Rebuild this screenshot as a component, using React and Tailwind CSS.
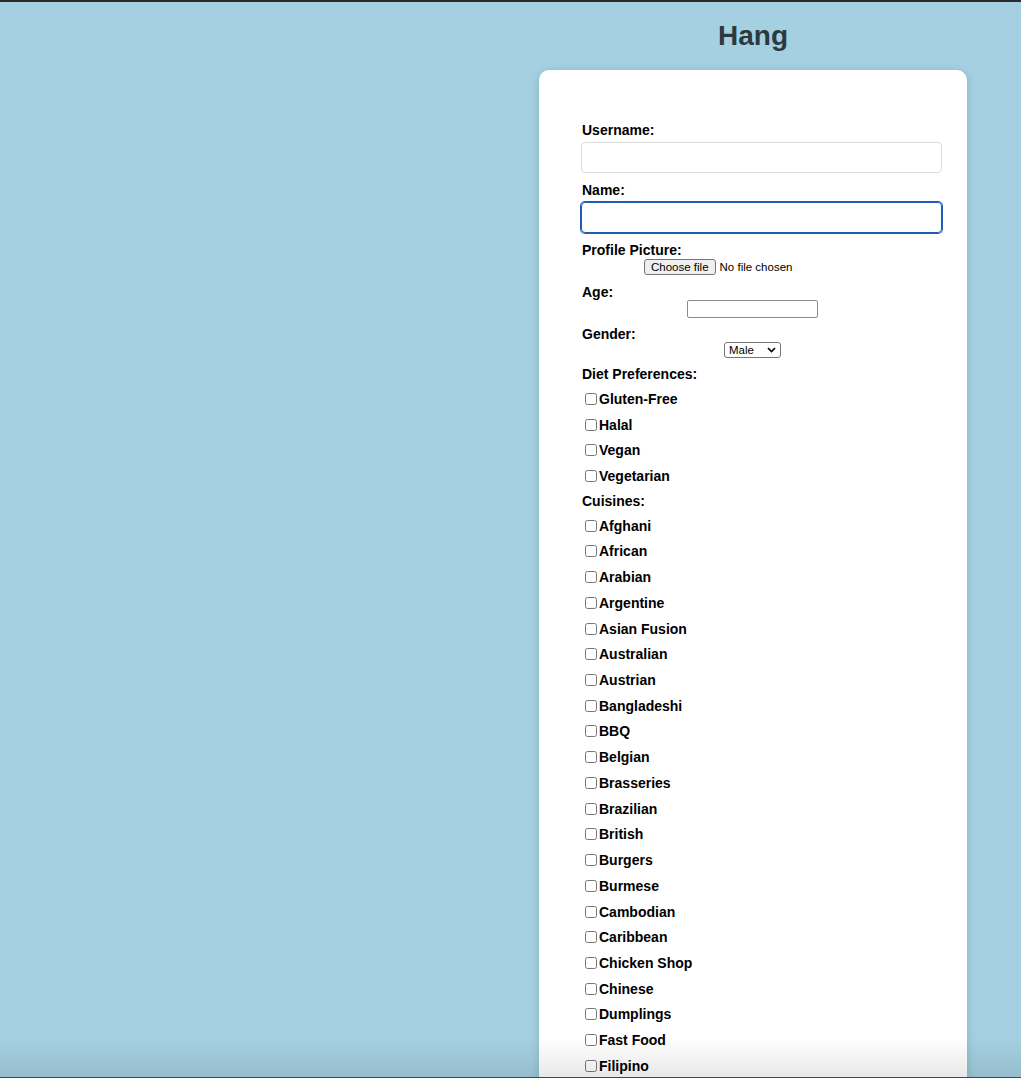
import React from 'react';

const diets = ['Gluten-Free', 'Halal', 'Vegan', 'Vegetarian'];

const cuisines = [
    'Afghani', 'African', 'Arabian', 'Argentine', 'Asian Fusion', 'Australian', 'Austrian',
    'Bangladeshi', 'BBQ', 'Belgian', 'Brasseries', 'Brazilian', 'British', 'Burgers', 'Burmese',
    'Cambodian', 'Caribbean', 'Chicken Shop', 'Chinese', 'Dumplings', 'Fast Food', 'Filipino',
];

const CheckRow = ({ label }) => (
    <label className="flex items-center h-[25.72px]">
        <input type="checkbox" className="m-0 ml-[3px] mr-[2px] w-[12px] h-[12px]" />
        <span>{label}</span>
    </label>
);

const App = () => {
    return (
        <div className="relative h-[1078px] overflow-hidden bg-[#a4d0e1] border-t-2 border-[#2b2b2b] font-['Liberation_Sans',Arial,sans-serif]">
            <div className="flex justify-end pr-[54px]">
                <div className="w-[428px]">
                    <h1 className="mt-[18px] mb-[19px] text-center text-[28px] leading-[31px] font-bold text-[#2c3a40]">Hang</h1>

                    <div className="bg-white rounded-[10px] px-[43px] pt-[52px] pb-[40px] shadow-[0_2px_10px_rgba(0,0,0,0.15)] text-[14px] leading-[16px] font-bold text-black">
                        {/* Username */}
                        <div className="mb-[4px]">Username:</div>
                        <input type="text" className="block w-[361px] h-[31px] border border-[#dcdcdc] rounded-[4px] mb-[9px] -ml-px outline-none" />

                        {/* Name */}
                        <div className="mb-[4px]">Name:</div>
                        <input type="text" className="block w-[361px] h-[31px] border border-[#1f5cb8] ring-1 ring-[#1f5cb8] rounded-[4px] mb-[9px] -ml-px outline-none" />

                        {/* Profile picture */}
                        <div>Profile Picture:</div>
                        <div className="flex justify-center h-[18px] mb-[8px] w-[341px] font-normal text-[11.5px]">
                            <div className="w-[217px] flex items-center">
                                <span className="h-[16px] px-[6px] flex items-center border border-[#767676] rounded-[3px] bg-[#efefef] text-black">Choose file</span>
                                <span className="ml-[4px] text-black">No file chosen</span>
                            </div>
                        </div>

                        {/* Age */}
                        <div>Age:</div>
                        <div className="flex justify-center w-[341px] mb-[8px]">
                            <input type="text" className="block w-[131px] h-[18px] border border-[#8a8a8a] rounded-[2px] outline-none" />
                        </div>

                        {/* Gender */}
                        <div>Gender:</div>
                        <div className="flex justify-center w-[341px] mb-[8px]">
                            <div className="w-[57px] h-[16px] border border-[#767676] rounded-[3px] flex items-center justify-between pl-[4px] pr-[4px] font-normal text-[11.5px]">
                                <span>Male</span>
                                <svg width="9" height="6" viewBox="0 0 9 6" fill="none">
                                    <path d="M1 1l3.5 3.5L8 1" stroke="#000" strokeWidth="1.6" />
                                </svg>
                            </div>
                        </div>

                        {/* Diet */}
                        <div>Diet Preferences:</div>
                        <div className="mt-[4px] mb-[4px]">
                            {diets.map((d) => <CheckRow key={d} label={d} />)}
                        </div>

                        {/* Cuisines */}
                        <div>Cuisines:</div>
                        <div className="mt-[4px]">
                            {cuisines.map((c) => <CheckRow key={c} label={c} />)}
                        </div>
                    </div>
                </div>
            </div>

            {/* bottom window shading */}
            <div className="absolute left-0 right-0 bottom-0 h-[40px] pointer-events-none bg-gradient-to-b from-transparent to-[rgba(0,0,0,0.09)] border-b border-[#3b4a52]"></div>
        </div>
    );
};

export default App;
